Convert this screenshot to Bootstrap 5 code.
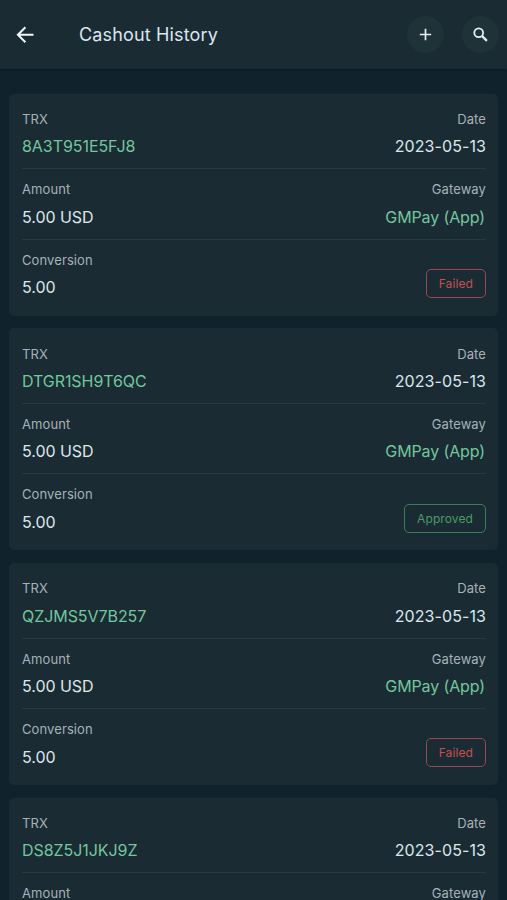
<!DOCTYPE html>
<html lang="en">
<head>
<meta charset="utf-8">
<meta name="viewport" content="width=device-width, initial-scale=1">
<title>Cashout History</title>
<link href="https://cdn.jsdelivr.net/npm/bootstrap@5.3.0/dist/css/bootstrap.min.css" rel="stylesheet">
<style>
  body { background: #10222b; color: #dde7eb; font-family: Inter, "Liberation Sans", sans-serif; height: 900px; overflow: hidden; }
  .topbar { height: 69px; background: #1a2b34; padding: 0 8px 0 15px; box-shadow: 0 1px 2px #0c1c24; }
  .back { width: 20px; height: 20px; }
  .page-title { font-size: 18px; letter-spacing: .15px; color: #dce6ee; margin-left: 44px; line-height: 24px; }
  .actions { gap: 18px; }
  .round-btn { width: 37px; height: 37px; background: #1f3238; color: #e4eef2; border: 0; }
  .list { height: 831px; overflow: hidden; padding: 24.7px 9px 0; gap: 12.7px; }
  .trx-card { background: #1a2b34; border-radius: 5px; height: 222px; padding: 5.3px 12px 0 13px; flex: none; }
  .trx-row { height: 70.4px; padding-top: 10px; border-bottom: 1px solid #273a42; }
  .trx-row:last-child { border-bottom: 0; }
  .lbl { font-size: 13px; line-height: 20px; letter-spacing: .1px; color: #a5b2bb; }
  .val { font-size: 16px; line-height: 24px; margin-top: 5.4px; letter-spacing: -.06px; color: #dde7eb; }
  .val.date { letter-spacing: .08px; }
  .val.green { color: #72c79c; }
  .val.gateway { padding-right: 1px; letter-spacing: -.12px; }
  .status { height: 29px; border: 1px solid; border-radius: 5px; font-size: 12px; letter-spacing: .1px; padding: 1px 12px 0; margin-top: 19.3px; }
  .failed { color: #c64f50; border-color: #9b474f; }
  .approved { color: #4a9c65; border-color: #3b7d57; }
</style>
</head>
<body>
<header class="topbar d-flex align-items-center">
  <svg class="back" viewBox="0 0 20 20" fill="none" stroke="#f0f6f8" stroke-width="2"><path d="M18.5 9.7H3.6M10.4 2.2L2.9 9.7l7.5 7.5"/></svg>
  <h1 class="page-title mb-0 fw-normal me-auto">Cashout History</h1>
  <div class="actions d-flex">
    <button class="round-btn rounded-circle d-flex align-items-center justify-content-center p-0" aria-label="Add"><svg width="13" height="13" viewBox="0 0 13 13" stroke="currentColor" stroke-width="1.7"><path d="M6.5 .8v11.4M.8 6.5h11.4"/></svg></button>
    <button class="round-btn rounded-circle d-flex align-items-center justify-content-center p-0" aria-label="Search"><svg width="15" height="15" viewBox="0 0 15 15" fill="none" stroke="currentColor" stroke-width="1.8"><circle cx="5.7" cy="5.7" r="4.4"/><path d="M8.9 8.9l5 5" stroke-width="2.2"/></svg></button>
  </div>
</header>
<main class="list d-flex flex-column">
  <article class="trx-card">
    <div class="trx-row d-flex justify-content-between"><div><div class="lbl">TRX</div><div class="val green">8A3T951E5FJ8</div></div><div class="text-end"><div class="lbl">Date</div><div class="val date">2023-05-13</div></div></div>
    <div class="trx-row d-flex justify-content-between"><div><div class="lbl">Amount</div><div class="val">5.00 USD</div></div><div class="text-end"><div class="lbl">Gateway</div><div class="val green gateway">GMPay (App)</div></div></div>
    <div class="trx-row d-flex justify-content-between"><div><div class="lbl">Conversion</div><div class="val">5.00</div></div><div class="status failed d-flex align-items-center">Failed</div></div>
  </article>
  <article class="trx-card">
    <div class="trx-row d-flex justify-content-between"><div><div class="lbl">TRX</div><div class="val green">DTGR1SH9T6QC</div></div><div class="text-end"><div class="lbl">Date</div><div class="val date">2023-05-13</div></div></div>
    <div class="trx-row d-flex justify-content-between"><div><div class="lbl">Amount</div><div class="val">5.00 USD</div></div><div class="text-end"><div class="lbl">Gateway</div><div class="val green gateway">GMPay (App)</div></div></div>
    <div class="trx-row d-flex justify-content-between"><div><div class="lbl">Conversion</div><div class="val">5.00</div></div><div class="status approved d-flex align-items-center">Approved</div></div>
  </article>
  <article class="trx-card">
    <div class="trx-row d-flex justify-content-between"><div><div class="lbl">TRX</div><div class="val green">QZJMS5V7B257</div></div><div class="text-end"><div class="lbl">Date</div><div class="val date">2023-05-13</div></div></div>
    <div class="trx-row d-flex justify-content-between"><div><div class="lbl">Amount</div><div class="val">5.00 USD</div></div><div class="text-end"><div class="lbl">Gateway</div><div class="val green gateway">GMPay (App)</div></div></div>
    <div class="trx-row d-flex justify-content-between"><div><div class="lbl">Conversion</div><div class="val">5.00</div></div><div class="status failed d-flex align-items-center">Failed</div></div>
  </article>
  <article class="trx-card">
    <div class="trx-row d-flex justify-content-between"><div><div class="lbl">TRX</div><div class="val green">DS8Z5J1JKJ9Z</div></div><div class="text-end"><div class="lbl">Date</div><div class="val date">2023-05-13</div></div></div>
    <div class="trx-row d-flex justify-content-between"><div><div class="lbl">Amount</div></div><div class="text-end"><div class="lbl">Gateway</div></div></div>
  </article>
</main>
<script src="https://cdn.jsdelivr.net/npm/bootstrap@5.3.0/dist/js/bootstrap.bundle.min.js"></script>
</body>
</html>
